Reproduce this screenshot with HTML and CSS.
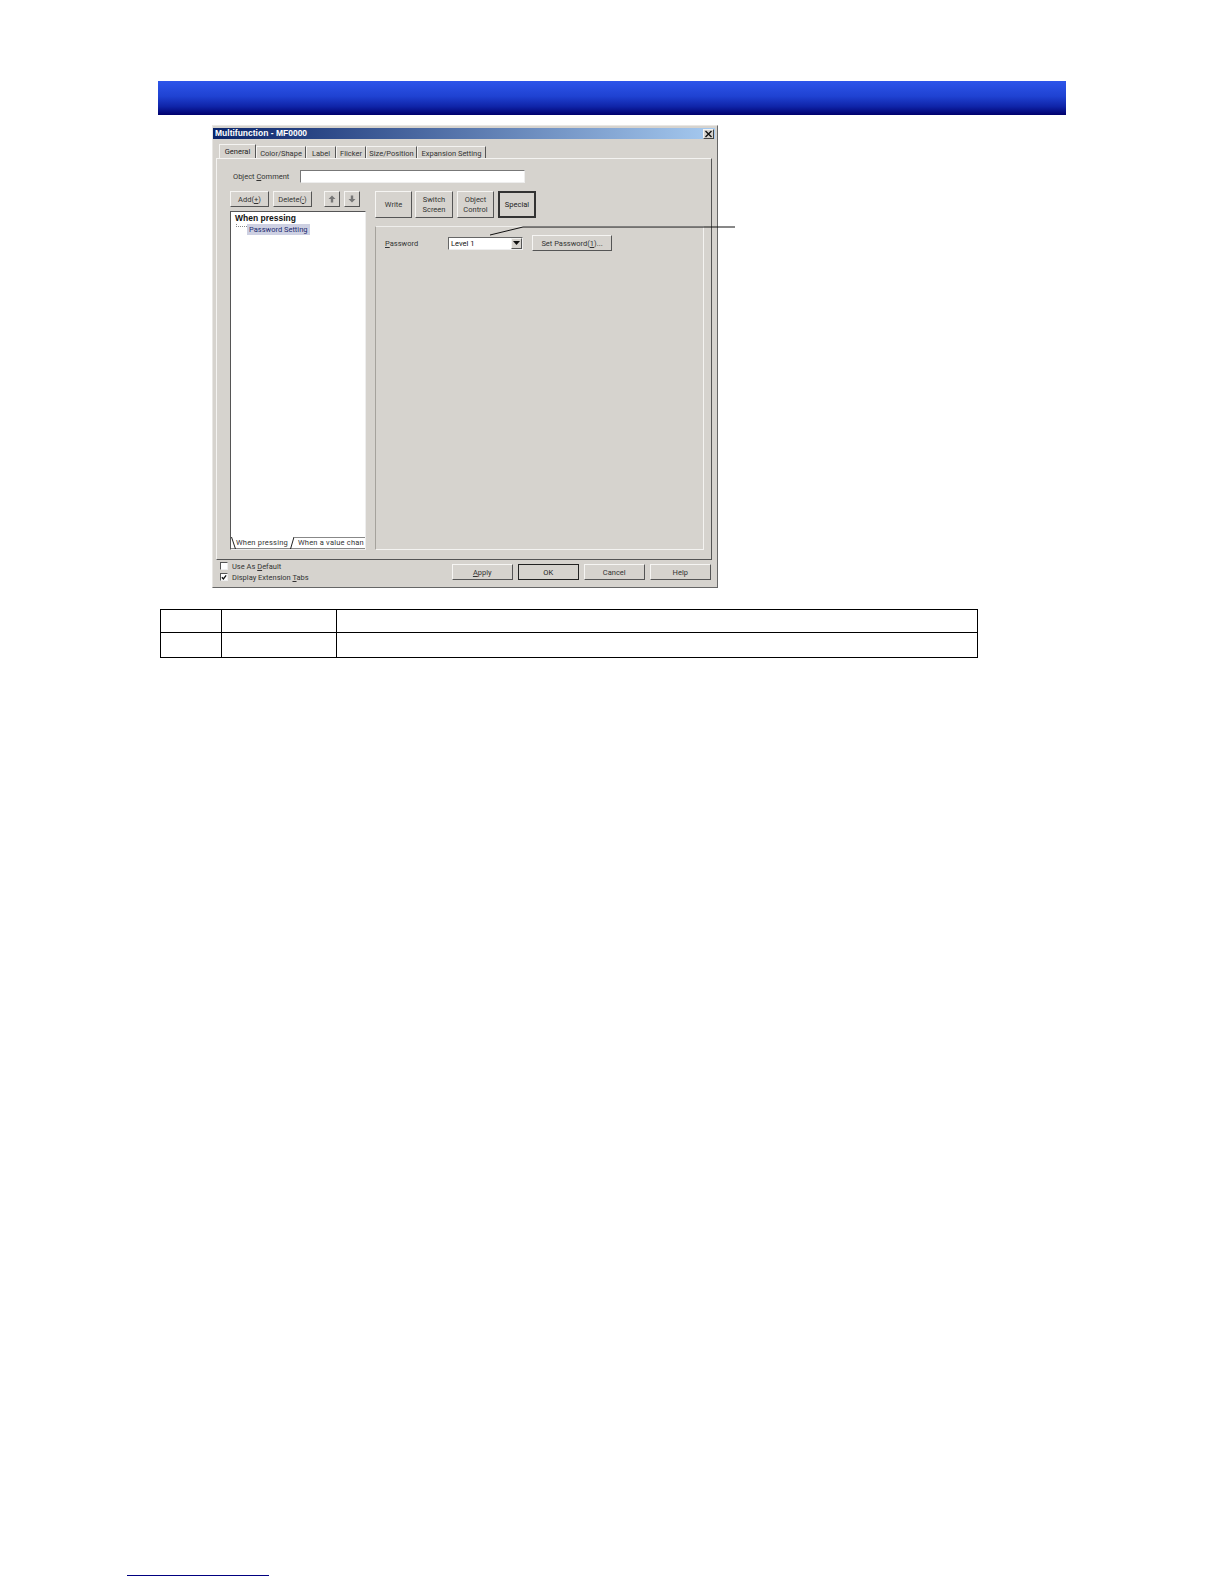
FILE: index.html
```html
<!DOCTYPE html>
<html lang="en">
<head>
<meta charset="utf-8">
<title>Multifunction - MF0000</title>
<link rel="stylesheet" href="styles.css">
</head>
<body>
<div class="page">
  <div class="banner"></div>

  <div class="dialog">
    <div class="titlebar">
      <span class="title">Multifunction - MF0000</span>
      <span class="close"><svg width="9" height="8" viewBox="0 0 9 8"><path d="M1.5 1L7.5 7M7.5 1L1.5 7" stroke="#111" stroke-width="1.4" fill="none"/></svg></span>
    </div>

    <div class="tabs">
      <span class="tab tab-active">General</span>
      <span class="tab tab-color">Color/Shape</span>
      <span class="tab tab-label">Label</span>
      <span class="tab tab-flicker">Flicker</span>
      <span class="tab tab-size">Size/Position</span>
      <span class="tab tab-exp">Expansion Setting</span>
    </div>

    <div class="panel">
      <div class="comment-row">
        <span class="comment-label">Object <u>C</u>omment</span>
        <span class="comment-input"></span>
      </div>
      <div class="main-row">
        <div class="left-col">
          <div class="list-buttons">
            <span class="btn btn-add">Add(<u>+</u>)</span>
            <span class="btn btn-del">Delete(<u>-</u>)</span>
            <span class="btn btn-arrow btn-up"><svg width="8" height="8" viewBox="0 0 8 8"><path d="M4 0.5L7.5 4H5.2V7.5H2.8V4H0.5Z" fill="#777"/></svg></span>
            <span class="btn btn-arrow"><svg width="8" height="8" viewBox="0 0 8 8"><path d="M4 7.5L7.5 4H5.2V0.5H2.8V4H0.5Z" fill="#777"/></svg></span>
          </div>
          <div class="tree">
            <div class="tree-body">
              <div class="tree-root">When pressing</div>
              <div class="tree-item">
                <span class="tree-dots"></span>
                <span class="tree-sel">Password Setting</span>
              </div>
            </div>
            <div class="sheet-tabs">
              <svg class="slant slant-a" width="5" height="12" viewBox="0 0 5 12"><path d="M0.5 0L4.5 12" stroke="#222" fill="none"/></svg>
              <span class="sheet sheet-a">When pressing</span>
              <svg class="slant slant-b" width="6" height="12" viewBox="0 0 6 12"><path d="M0.5 12L4 0" stroke="#222" fill="none"/><path d="M4 0.5H6" stroke="#888" fill="none"/></svg>
              <span class="sheet sheet-b">When a value chan</span>
            </div>
          </div>
        </div>
        <div class="right-col">
          <div class="type-buttons">
            <span class="btn type type-write">Write</span>
            <span class="btn type type-switch">Switch<br>Screen</span>
            <span class="btn type type-object">Object<br>Control</span>
            <span class="btn type type-special">Special</span>
          </div>
          <div class="group">
            <div class="password-row">
              <span class="password-label"><u>P</u>assword</span>
              <span class="combo">
                <span class="combo-text">Level 1</span>
                <span class="combo-arrow"><svg width="7" height="4" viewBox="0 0 7 4"><path d="M0 0H7L3.5 4Z" fill="#111"/></svg></span>
              </span>
              <span class="btn btn-set">Set Password(<u>1</u>)...</span>
            </div>
          </div>
        </div>
      </div>
    </div>

    <div class="dialog-foot">
      <div class="checks">
        <div class="check-row"><span class="check"></span><span>Use As <u>D</u>efault</span></div>
        <div class="check-row"><span class="check"><svg width="7" height="7" viewBox="0 0 7 7"><path d="M1 3.2L2.8 5.2L6 1" stroke="#111" stroke-width="1.5" fill="none"/></svg></span><span>Display Extension <u>T</u>abs</span></div>
      </div>
      <div class="foot-buttons">
        <span class="btn foot-btn"><u>A</u>pply</span>
        <span class="btn foot-btn foot-default">OK</span>
        <span class="btn foot-btn">Cancel</span>
        <span class="btn foot-btn">Help</span>
      </div>
    </div>

    <svg class="callout" width="246" height="10" viewBox="0 0 246 10"><path d="M0 9L33 1H245" stroke="#111" fill="none"/></svg>
  </div>

  <table class="spec">
    <tr class="row-a"><td class="c1"></td><td class="c2"></td><td></td></tr>
    <tr class="row-b"><td class="c1"></td><td class="c2"></td><td></td></tr>
  </table>

  <div class="foot-rule"></div>
</div>
</body>
</html>
```

FILE: styles.css
```css
* { box-sizing: border-box; }
html, body { margin: 0; background: #fff; }
.page {
  width: 1224px;
  height: 1584px;
  padding-top: 81px;
  display: flex;
  flex-direction: column;
  align-items: flex-start;
}
.banner {
  margin-left: 158px;
  width: 908px;
  height: 34px;
  background: linear-gradient(#2d55ea 0%, #1f42d2 45%, #0f24a8 75%, #00006c 100%);
}
.dialog {
  position: relative;
  margin: 10px 0 0 212px;
  width: 506px;
  height: 463px;
  background: #d6d3ce;
  border: 1px solid;
  border-color: #e8e6e3 #666 #666 #e8e6e3;
  padding: 2px 5px 0 0;
  font: 7.5px/11px Roboto, "Liberation Sans", Arial, sans-serif;
  color: #333;
}
.titlebar {
  height: 11px;
  margin-right: -3px;
  display: flex;
  align-items: center;
  justify-content: space-between;
  background: linear-gradient(90deg, #0a246a, #a6caf0);
}
.title {
  color: #fff;
  font: bold 8.5px/11px "Liberation Sans", Arial, sans-serif;
  padding-left: 2px;
}
.close {
  width: 11px;
  height: 10px;
  margin-right: 1px;
  display: flex;
  align-items: center;
  justify-content: center;
  background: #d6d3ce;
  border: 1px solid;
  border-color: #f4f3f1 #444 #444 #f4f3f1;
}
.tabs {
  display: flex;
  height: 13px;
  margin-top: 6px;
  padding-left: 6px;
  align-items: flex-end;
}
.tab {
  height: 12px;
  line-height: 13px;
  text-align: center;
  white-space: nowrap;
  border-right: 1px solid #555;
  border-left: 1px solid #f4f3f1;
  border-top: 1px solid #f4f3f1;
}
.tab-active { width: 37px; height: 14px; color: #222; }
.tab-color { width: 50px; }
.tab-label { width: 30px; }
.tab-flicker { width: 30px; }
.tab-size { width: 51px; }
.tab-exp { width: 69px; }
.panel {
  height: 402px;
  margin-left: 3px;
  border: 1px solid;
  border-color: #f4f3f1 #555 #555 #f4f3f1;
  padding: 11px 4px 9px 13px;
  display: flex;
  flex-direction: column;
}
.comment-row {
  display: flex;
  height: 13px;
  align-items: center;
  padding-left: 3px;
}
.comment-label { width: 67px; }
.comment-input {
  width: 225px;
  height: 13px;
  background: #fff;
  border: 1px solid;
  border-color: #777 #eee #eee #777;
}
.main-row {
  display: flex;
  margin-top: 8px;
  flex: 1;
  min-height: 0;
}
.left-col {
  width: 136px;
  display: flex;
  flex-direction: column;
}
.list-buttons {
  display: flex;
  height: 16px;
}
.btn {
  display: flex;
  align-items: center;
  justify-content: center;
  text-align: center;
  background: #d6d3ce;
  border: 1px solid;
  border-color: #f6f5f3 #555 #555 #f6f5f3;
}
.btn-add { width: 39px; }
.btn-del { width: 39px; margin-left: 4px; }
.btn-arrow { width: 16px; margin-left: 4px; }
.btn-up { margin-left: 12px; }
.tree {
  margin-top: 4px;
  flex: 1;
  display: flex;
  flex-direction: column;
  background: #fff;
  border: 1px solid;
  border-color: #555 #eee #eee #555;
}
.tree-body { flex: 1; padding: 1px 0 0 4px; }
.tree-root {
  font: bold 8.5px/11px "Liberation Sans", Arial, sans-serif;
  color: #111;
  height: 11px;
}
.tree-item { display: flex; height: 11px; align-items: flex-start; }
.tree-dots {
  width: 11px;
  height: 3px;
  margin-left: 1px;
  border-left: 1px dotted #888;
  border-bottom: 1px dotted #888;
}
.tree-sel {
  padding: 0 2px;
  background: #cdd0e2;
  color: #1c2a70;
}
.sheet-tabs {
  display: flex;
  height: 12px;
  align-items: center;
  border-bottom: 1px solid #888;
}
.slant { flex: none; }
.sheet { white-space: nowrap; }
.sheet-a { width: 54px; letter-spacing: 0.2px; }
.sheet-b {
  flex: 1;
  height: 12px;
  padding-left: 2px;
  line-height: 10px;
  letter-spacing: 0.2px;
  border-top: 1px solid #888;
}
.right-col {
  margin-left: 9px;
  width: 329px;
  display: flex;
  flex-direction: column;
}
.type-buttons {
  display: flex;
  height: 27px;
}
.type { line-height: 10px; }
.type-write { width: 37px; }
.type-switch { width: 38px; margin-left: 3px; }
.type-object { width: 37px; margin-left: 4px; }
.type-special {
  width: 38px;
  margin-left: 4px;
  border: 2px solid #333;
  color: #222;
}
.group {
  margin-top: 8px;
  flex: 1;
  border: 1px solid;
  border-color: #efeeec #f4f3f1 #f4f3f1 #a5a29c;
  padding: 8px 0 0 9px;
}
.password-row { display: flex; align-items: center; height: 16px; }
.password-label { width: 63px; }
.combo {
  display: flex;
  width: 75px;
  height: 13px;
  background: #fff;
  border: 1px solid;
  border-color: #666 #eee #eee #666;
  justify-content: space-between;
}
.combo-text { padding-left: 2px; color: #111; line-height: 12px; }
.combo-arrow {
  width: 11px;
  display: flex;
  align-items: center;
  justify-content: center;
  background: #d6d3ce;
  border: 1px solid;
  border-color: #f4f3f1 #555 #555 #f4f3f1;
}
.btn-set { width: 80px; height: 16px; margin-left: 9px; }
.dialog-foot {
  display: flex;
  justify-content: space-between;
  padding: 2px 0 0 7px;
}
.checks { display: flex; flex-direction: column; gap: 3px; }
.check-row { display: flex; align-items: center; gap: 4px; height: 8px; }
.check {
  width: 8px;
  height: 8px;
  display: flex;
  align-items: center;
  justify-content: center;
  background: #fff;
  border: 1px solid;
  border-color: #555 #eee #eee #555;
}
.foot-buttons { display: flex; gap: 4.5px; margin: 2px 1px 0 0; }
.foot-btn { width: 61.5px; height: 16px; }
.foot-default { border: 1.5px solid #222; color: #222; }
.callout { position: absolute; left: 277px; top: 100px; }
.spec {
  margin: 21px 0 0 160px;
  width: 818px;
  height: 48px;
  border-collapse: collapse;
}
.spec td { border: 1px solid #000; padding: 0; }
.row-a td { height: 23px; }
.row-b td { height: 25px; }
.c1 { width: 61px; }
.c2 { width: 115px; }
.foot-rule {
  margin: auto 0 8px 127px;
  width: 142px;
  height: 1px;
  background: #000080;
}
```
